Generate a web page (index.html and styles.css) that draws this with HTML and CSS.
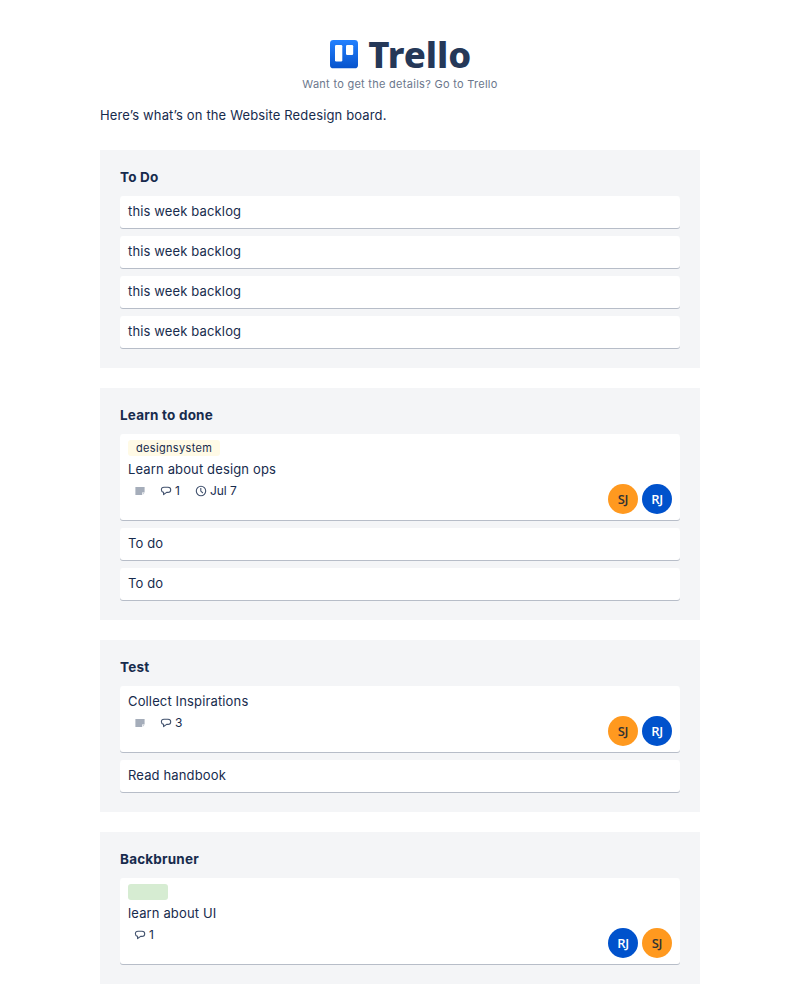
FILE: index.html
```html
<!DOCTYPE html>
<html lang="en">
<head>
<meta charset="utf-8">
<title>Website Redesign board</title>
<link rel="stylesheet" href="styles.css">
</head>
<body>
<svg class="defs" width="0" height="0" aria-hidden="true">
  <symbol id="desc" viewBox="0 0 12 12"><path d="M1.4 2H10.6V7.5H8V10H1.4Z" fill="#a5adba"/><path d="M8.6 8.1H10.4L8.6 9.9Z" fill="#c4cad4"/></symbol>
  <symbol id="comment" viewBox="0 0 12 12"><path d="M4 2.2H8C9.8 2.2 10.7 3.3 10.7 4.7S9.8 7.4 8 7.4H6.6L3.6 9.6V7.4C2.1 7.1 1.4 6.1 1.4 4.7C1.4 3.3 2.3 2.2 4 2.2Z" fill="none" stroke="#42526e" stroke-width="1.1" stroke-linejoin="round"/></symbol>
  <symbol id="clock" viewBox="0 0 12 12"><circle cx="6" cy="6" r="4.7" fill="none" stroke="#42526e" stroke-width="1.1"/><path d="M5.8 3V6.1L7.9 8" fill="none" stroke="#42526e" stroke-width="1.1"/></symbol>
</svg>
<main class="email">
  <header class="header">
    <svg class="logo" width="142" height="32" viewBox="0 0 142 32" role="img" aria-label="Trello">
      <defs><linearGradient id="blue" x1="0" y1="0" x2="0" y2="1"><stop offset="0" stop-color="#2381ff"/><stop offset="1" stop-color="#0753cc"/></linearGradient></defs>
      <rect x="1" y="2" width="28" height="28.3" rx="3.4" fill="url(#blue)"/>
      <rect x="6" y="7" width="7.3" height="16.4" rx="1.2" fill="#fff"/>
      <rect x="17" y="7" width="7.2" height="10" rx="1.2" fill="#fff"/>
      <text class="wordmark" x="39.3" y="29.8" textLength="103" lengthAdjust="spacingAndGlyphs">Trello</text>
    </svg>
    <p class="tagline">Want to get the details? Go to Trello</p>
  </header>
  <p class="intro">Here’s what’s on the Website Redesign board.</p>

  <section class="list">
    <h2 class="list-title">To Do</h2>
    <div class="card"><p class="name">this week backlog</p></div>
    <div class="card"><p class="name">this week backlog</p></div>
    <div class="card"><p class="name">this week backlog</p></div>
    <div class="card"><p class="name">this week backlog</p></div>
  </section>

  <section class="list">
    <h2 class="list-title">Learn to done</h2>
    <div class="card">
      <span class="label yellow">designsystem</span>
      <p class="name">Learn about design ops</p>
      <div class="meta">
        <div class="badges">
          <span class="badge"><svg class="icon"><use href="#desc"/></svg></span>
          <span class="badge"><svg class="icon"><use href="#comment"/></svg>1</span>
          <span class="badge"><svg class="icon"><use href="#clock"/></svg>Jul 7</span>
        </div>
        <div class="members"><span class="avatar orange">SJ</span><span class="avatar blue">RJ</span></div>
      </div>
    </div>
    <div class="card"><p class="name">To do</p></div>
    <div class="card"><p class="name">To do</p></div>
  </section>

  <section class="list">
    <h2 class="list-title">Test</h2>
    <div class="card">
      <p class="name">Collect Inspirations</p>
      <div class="meta">
        <div class="badges">
          <span class="badge"><svg class="icon"><use href="#desc"/></svg></span>
          <span class="badge"><svg class="icon"><use href="#comment"/></svg>3</span>
        </div>
        <div class="members"><span class="avatar orange">SJ</span><span class="avatar blue">RJ</span></div>
      </div>
    </div>
    <div class="card"><p class="name">Read handbook</p></div>
  </section>

  <section class="list">
    <h2 class="list-title">Backbruner</h2>
    <div class="card">
      <span class="label green"></span>
      <p class="name">learn about UI</p>
      <div class="meta">
        <div class="badges">
          <span class="badge"><svg class="icon"><use href="#comment"/></svg>1</span>
        </div>
        <div class="members"><span class="avatar blue">RJ</span><span class="avatar orange">SJ</span></div>
      </div>
    </div>
  </section>
</main>
</body>
</html>
```
FILE: styles.css
```css
* { box-sizing: border-box; }
body { margin: 0; background: #fff; color: #172b4d; font-family: Inter, sans-serif; font-size: 13px; letter-spacing: .14px; }
h2, p { margin: 0; }
.defs { position: absolute; }
.email { width: 600px; height: 1000px; margin: 0 auto; padding-top: 38px; overflow: hidden; }
.header { display: flex; flex-direction: column; align-items: center; }
.logo { display: block; overflow: visible; letter-spacing: 0; }
.wordmark { font-family: "Noto Sans", sans-serif; font-weight: 800; font-size: 36px; fill: #253858; }
.tagline { margin-top: 6px; font-size: 11px; line-height: 16px; letter-spacing: .28px; color: #6b778c; }
.intro { margin-top: 13px; line-height: 20px; margin-bottom: 25px; }
.list { margin-bottom: 20px; padding: 20px; background: #f4f5f7; }
.list-title { margin-bottom: 12px; font-size: 13.5px; line-height: 14px; font-weight: 700; letter-spacing: .2px; }
.card { display: flex; flex-direction: column; margin-bottom: 8px; padding: 6px 8px; background: #fff; border-radius: 3px; box-shadow: 0 1px 0 #b7bdc8; }
.card:last-child { margin-bottom: 0; }
.name { height: 20px; line-height: 19px; }
.label { align-self: flex-start; height: 16px; min-width: 40px; margin-bottom: 4px; padding: 0 8px; border-radius: 3px; font-size: 11px; line-height: 16px; letter-spacing: .33px; }
.yellow { background: #fffae6; }
.green { background: #d6ecd2; }
.meta { display: flex; justify-content: space-between; height: 34px; }
.badges { display: flex; gap: 14px; height: 22px; padding-left: 6px; align-items: center; }
.badge { display: flex; align-items: center; gap: 3px; font-size: 12px; line-height: 16px; letter-spacing: 0; }
.badge:nth-child(3) { margin-left: 1px; }
.icon { width: 12px; height: 12px; }
.members { display: flex; gap: 4px; align-self: flex-end; }
.avatar { width: 30px; height: 30px; border-radius: 50%; font: 600 13px/30px "Open Sans", sans-serif; letter-spacing: -.3px; text-align: center; }
.orange { background: #ff991f; color: #333; }
.blue { background: #0052cc; color: #fff; }
```
